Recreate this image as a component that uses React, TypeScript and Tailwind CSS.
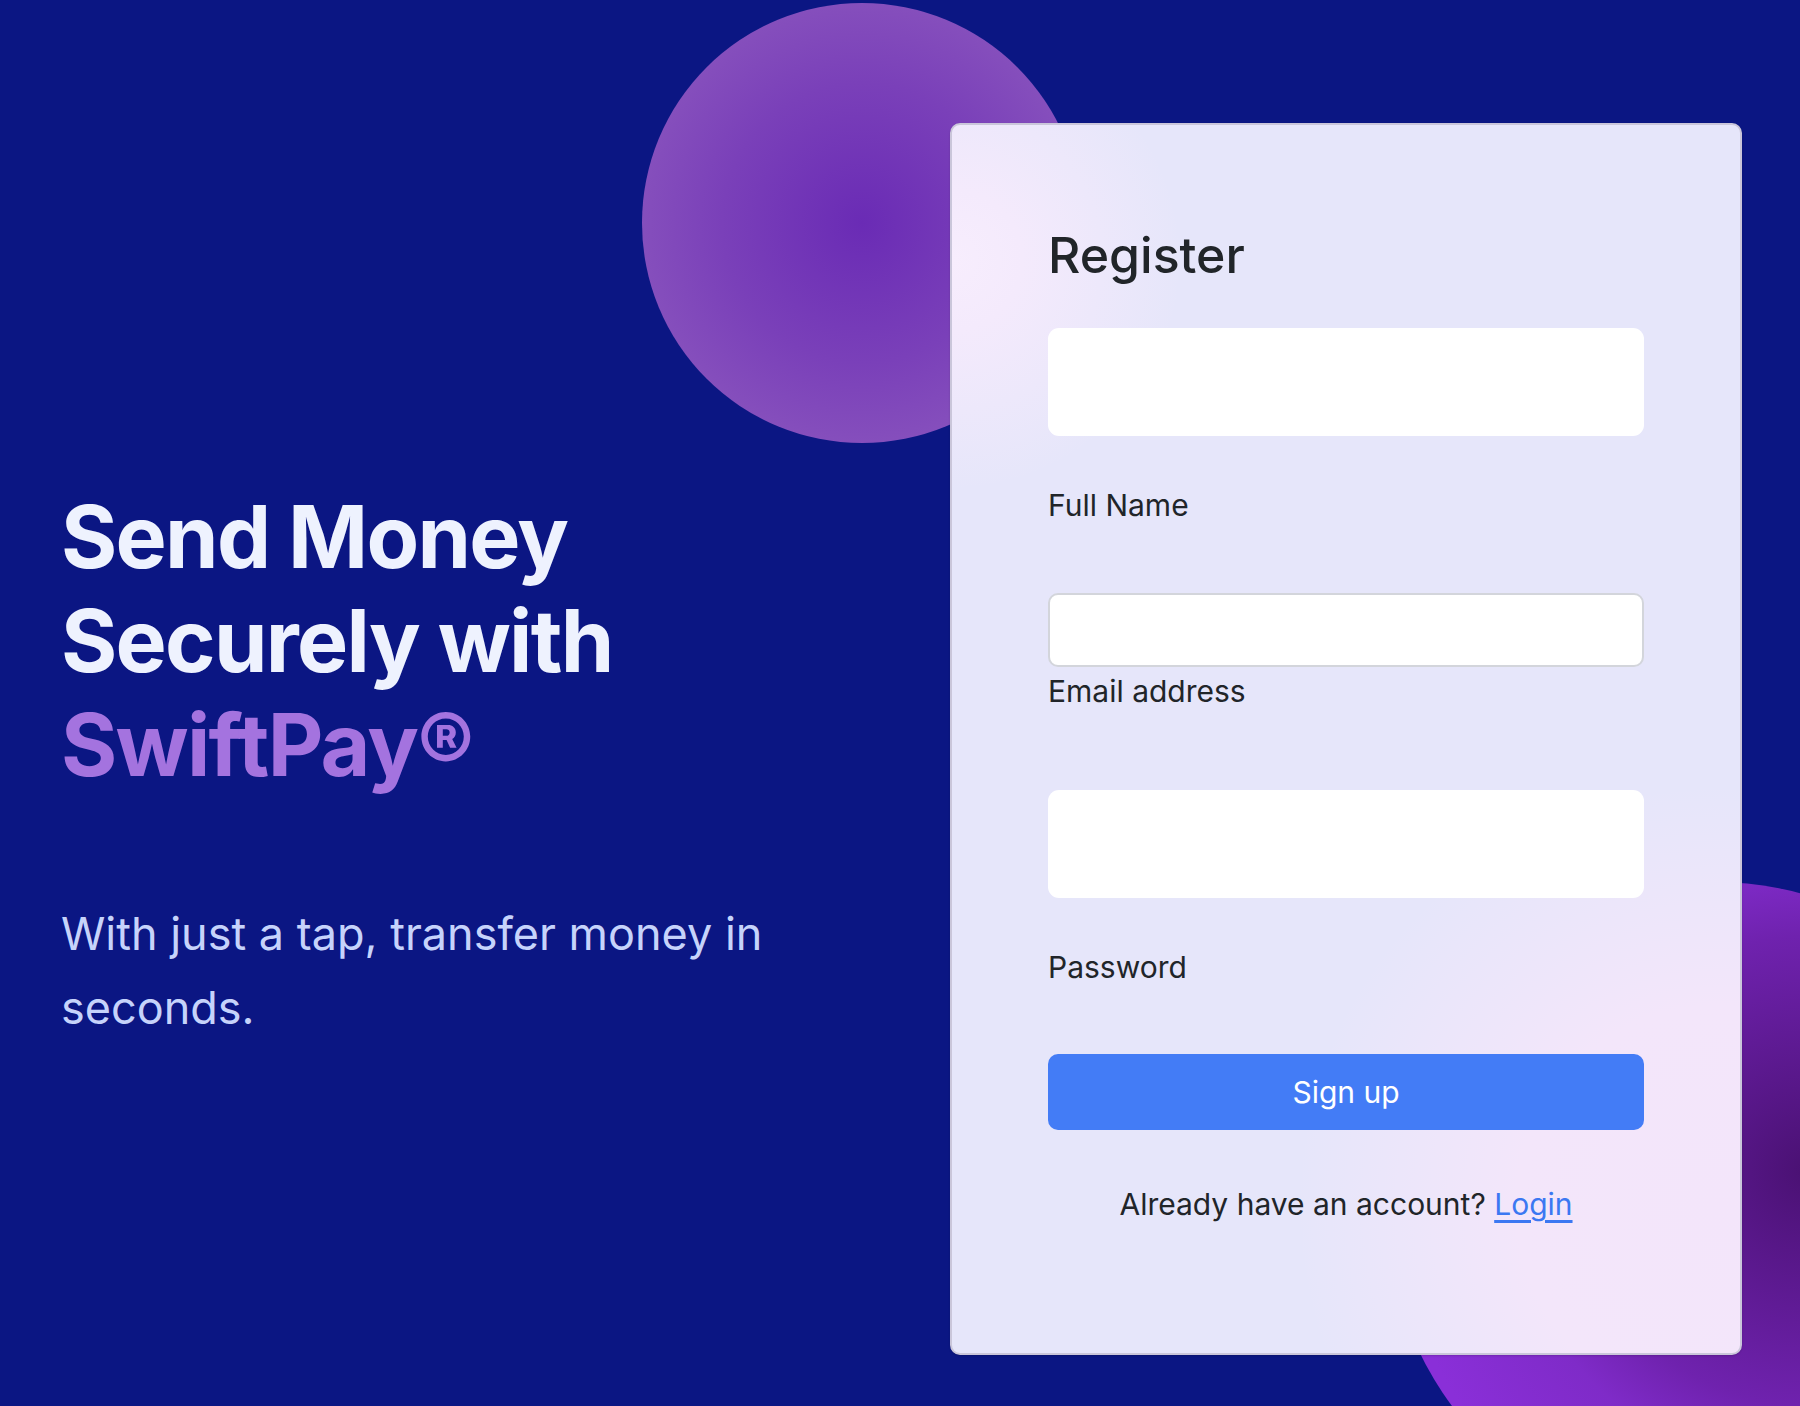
import { useState } from "react";

const Field = ({
  label,
  type,
  bordered,
  tall,
}: {
  label: string;
  type: string;
  bordered?: boolean;
  tall?: boolean;
}) => {
  const [value, setValue] = useState<string>("");
  return (
    <div className="flex flex-col">
      <input
        type={type}
        value={value}
        onChange={(e) => setValue(e.target.value)}
        className={
          bordered
            ? "w-full h-[74px] bg-white rounded-[10px] border-2 border-[#d3d5db] px-4 text-[30px] outline-none"
            : "w-full h-[108px] bg-white rounded-[11px] px-4 text-[30px] outline-none"
        }
      />
      <label
        className={
          tall
            ? "mt-[47px] text-[30px] leading-[45px] text-[#212529]"
            : "mt-[2px] text-[30px] leading-[45px] text-[#212529]"
        }
      >
        {label}
      </label>
    </div>
  );
};

const App = () => {
  return (
    <div className="relative flex h-[1406px] w-full overflow-hidden bg-[#0b1683] font-['Inter',sans-serif]">
      {/* background blobs */}
      <div className="absolute left-[642px] top-[3px] h-[440px] w-[440px] rounded-full bg-[radial-gradient(circle,#6a2bb5_0%,#7a40b9_45%,#925fc0_100%)]" />
      <div className="absolute left-[1387px] top-[882px] h-[656px] w-[656px] rounded-full bg-[radial-gradient(circle_at_64%_44%,#4a1173_0%,#6f22ae_42%,#7f2bc8_54%,#8a2fd8_75%)]" />

      <div className="relative flex-1 pl-[61px] pt-[485px]">
        <h1 className="text-[86px] font-bold leading-[104px] tracking-[-0.02em] text-[#eef2fe]">
          Send Money
          <br />
          Securely with
          <br />
          <span className="text-[#a473df]">SwiftPay®</span>
        </h1>
        <p className="mt-[100px] w-[760px] text-[45px] leading-[74px] text-[#c6d3fb]">
          With just a tap, transfer money in seconds.
        </p>
      </div>

      <div className="relative z-10 mr-[58px] mt-[123px] h-[1232px] w-[792px] shrink-0 rounded-[10px] border-2 border-[#cac6da] bg-[#e6e6fa] bg-[radial-gradient(circle_at_0%_11%,#f7edfd_0px,#f4eafc_70px,rgba(230,230,250,0)_230px),radial-gradient(circle_at_97%_88%,#f3e5fa_0px,#f3e6fa_200px,rgba(230,230,250,0)_420px)] px-[96px] pt-[100px] shadow-[0_1px_2px_rgba(0,0,0,0.15)]">
        <h2 className="text-[50px] font-medium leading-[60px] text-[#212529]">
          Register
        </h2>
        <div className="mt-[43px] flex flex-col">
          <Field label="Full Name" type="text" tall />
          <div className="mt-[65px]">
            <Field label="Email address" type="email" bordered />
          </div>
          <div className="mt-[76px]">
            <Field label="Password" type="password" tall />
          </div>
          <button className="mt-[64px] h-[76px] w-full rounded-[10px] bg-[#437cf6] text-[30px] text-white">
            Sign up
          </button>
          <p className="mt-[52px] text-center text-[30px] leading-[45px] text-[#212529]">
            Already have an account?{" "}
            <a href="#" className="text-[#3b78f2] underline underline-offset-[5px]">
              Login
            </a>
          </p>
        </div>
      </div>
    </div>
  );
};

export default App;
